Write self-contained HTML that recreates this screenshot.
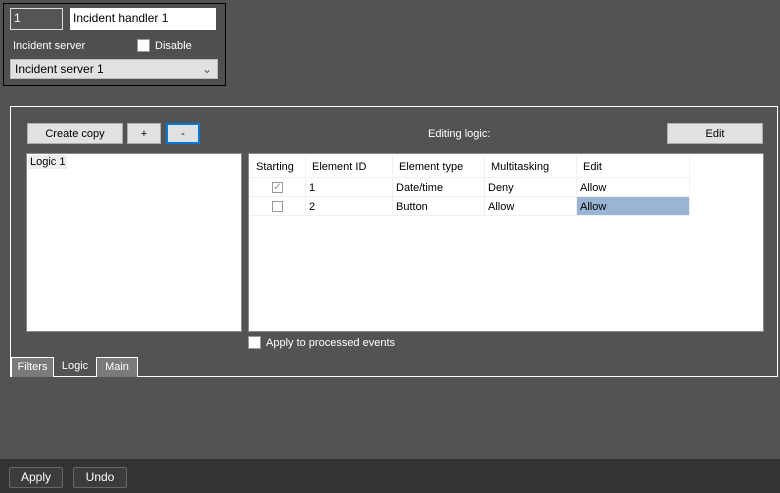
<!DOCTYPE html>
<html><head><style>
*{box-sizing:border-box;margin:0;padding:0}
body{width:780px;height:493px;background:#535353;font-family:"Liberation Sans",sans-serif;font-size:11px;color:#fff;position:relative;overflow:hidden}
.a{position:absolute}
.btn{position:absolute;background:#e1e1e1;border:1px solid #adadad;color:#000;text-align:center;line-height:20px;font-size:11px}
.cell{position:absolute;color:#000;font-size:11px;line-height:20px;padding-left:3px;border-right:1px solid #f0f0f0;border-bottom:1px solid #f0f0f0}
.cb{position:absolute;width:11px;height:11px;border:1px solid #999;background:#fff}
</style></head><body>
<div class="a" style="left:3px;top:3px;width:223px;height:83px;border:1px solid #000;background:#4f4f4f"></div>
<div class="a" style="left:10px;top:8px;width:53px;height:22px;border:1px solid #ddd;background:#555;line-height:18px;padding-left:3px;font-size:12px">1</div>
<div class="a" style="left:70px;top:8px;width:146px;height:22px;background:#fff;color:#000;line-height:20px;padding-left:3px;font-size:12px">Incident handler 1</div>
<div class="a" style="left:13px;top:40px">Incident server</div>
<div class="a" style="left:137px;top:39px;width:13px;height:13px;border:1px solid #999;background:#fff"></div>
<div class="a" style="left:155px;top:40px">Disable</div>
<div class="a" style="left:10px;top:59px;width:208px;height:20px;background:#e1e1e1;border:1px solid #bbb;color:#000;line-height:18px;padding-left:4px;font-size:12px">Incident server 1<span style="position:absolute;right:5px;color:#555">&#8964;</span></div>

<div class="a" style="left:10px;top:106px;width:768px;height:271px;border:1px solid #fff"></div>
<div class="btn" style="left:27px;top:123px;width:96px;height:21px">Create copy</div>
<div class="btn" style="left:127px;top:123px;width:34px;height:21px">+</div>
<div class="btn" style="left:166px;top:123px;width:34px;height:21px;border:2px solid #0078d7;line-height:18px">-</div>
<div class="a" style="left:428px;top:128px">Editing logic:</div>
<div class="btn" style="left:667px;top:123px;width:96px;height:21px">Edit</div>

<div class="a" style="left:26px;top:153px;width:216px;height:179px;background:#fff;border:1px solid #888"></div>
<div class="a" style="left:28px;top:155px;width:39px;height:14px;background:#eee;color:#000;padding-left:2px;line-height:14px">Logic 1</div>

<div class="a" style="left:248px;top:153px;width:516px;height:179px;background:#fff;border:1px solid #888"></div>
<div class="cell" style="left:250px;top:155px;width:56px;height:23px;line-height:24px;padding-left:6px">Starting</div>
<div class="cell" style="left:306px;top:155px;width:87px;height:23px;line-height:24px;padding-left:6px">Element ID</div>
<div class="cell" style="left:393px;top:155px;width:92px;height:23px;line-height:24px;padding-left:6px">Element type</div>
<div class="cell" style="left:485px;top:155px;width:92px;height:23px;line-height:24px;padding-left:6px">Multitasking</div>
<div class="cell" style="left:577px;top:155px;width:113px;height:23px;line-height:24px;padding-left:6px">Edit</div>
<div class="cell" style="left:250px;top:178px;width:56px;height:19px"></div>
<div class="cell" style="left:306px;top:178px;width:87px;height:19px">1</div>
<div class="cell" style="left:393px;top:178px;width:92px;height:19px">Date/time</div>
<div class="cell" style="left:485px;top:178px;width:92px;height:19px">Deny</div>
<div class="cell" style="left:577px;top:178px;width:113px;height:19px">Allow</div>
<div class="cell" style="left:250px;top:197px;width:56px;height:19px"></div>
<div class="cell" style="left:306px;top:197px;width:87px;height:19px">2</div>
<div class="cell" style="left:393px;top:197px;width:92px;height:19px">Button</div>
<div class="cell" style="left:485px;top:197px;width:92px;height:19px">Allow</div>
<div class="cell" style="left:577px;top:197px;width:113px;height:19px;background:#9ab5d3">Allow</div>
<div class="cb" style="left:272px;top:182px;color:#888;font-size:10px;line-height:9px;text-align:center">&#10003;</div>
<div class="cb" style="left:272px;top:201px"></div>

<div class="a" style="left:248px;top:336px;width:13px;height:13px;background:#fff;border:1px solid #999"></div>
<div class="a" style="left:266px;top:337px">Apply to processed events</div>

<div class="a" style="left:11px;top:357px;width:43px;height:20px;background:#7a7a7a;border:1px solid #fff;border-bottom:none;text-align:center;line-height:19px">Filters</div>
<div class="a" style="left:54px;top:356px;width:42px;height:20px;text-align:center;line-height:20px">Logic</div>
<div class="a" style="left:96px;top:357px;width:42px;height:20px;background:#7a7a7a;border:1px solid #fff;border-bottom:none;text-align:center;line-height:19px">Main</div>

<div class="a" style="left:0;top:459px;width:780px;height:34px;background:#333"></div>
<div class="a" style="left:9px;top:467px;width:54px;height:21px;border:1px solid #666;background:#3c3c3c;border-radius:2px;text-align:center;line-height:19px;font-size:12px">Apply</div>
<div class="a" style="left:73px;top:467px;width:54px;height:21px;border:1px solid #666;background:#3c3c3c;border-radius:2px;text-align:center;line-height:19px;font-size:12px">Undo</div>
</body></html>
